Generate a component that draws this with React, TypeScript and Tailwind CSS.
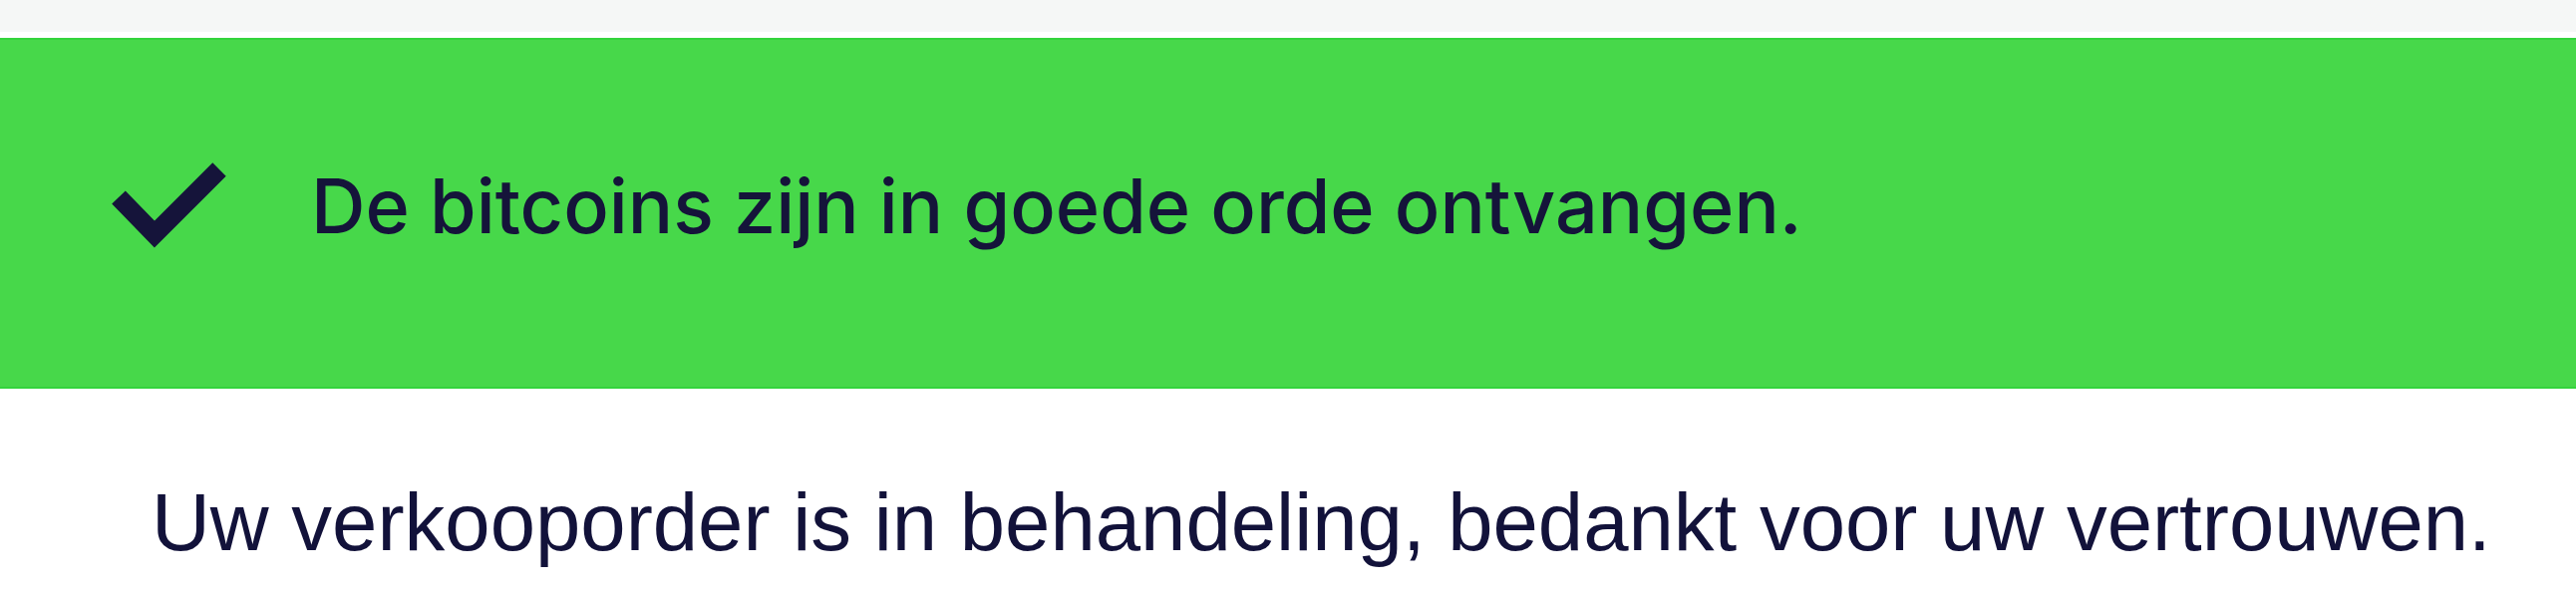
import React from 'react';

const CheckIcon: React.FC<{ className?: string }> = ({ className }) => (
  <svg className={className} viewBox="0 0 115 88" fill="none">
    <polyline
      points="7,35 43,72 108,7"
      stroke="#15143a"
      strokeWidth={19}
      strokeLinecap="butt"
      strokeLinejoin="miter"
    />
  </svg>
);

export default function App() {
  return (
    <div className="w-[2584px] h-[595px] bg-white overflow-hidden">
      <div className="h-[32px] bg-[#f5f7f6]" />
      <div className="h-[6px] bg-white" />
      <div className="h-[352px] bg-[#47d84a] border-y-2 border-[#33d43c] flex items-center pl-[112px] pb-[14px]">
        <CheckIcon className="w-[115px] h-[88px] shrink-0" />
        <p className="ml-[85px] text-[75.5px] font-medium leading-none text-[#15143a] font-['Inter',sans-serif]">
          De bitcoins zijn in goede orde ontvangen.
        </p>
      </div>
      <p className="pl-[152px] pt-[93px] text-[81.5px] leading-none text-[#12123a] font-['Liberation_Sans',Arial,sans-serif]">
        Uw verkooporder is in behandeling, bedankt voor uw vertrouwen.
      </p>
    </div>
  );
}
